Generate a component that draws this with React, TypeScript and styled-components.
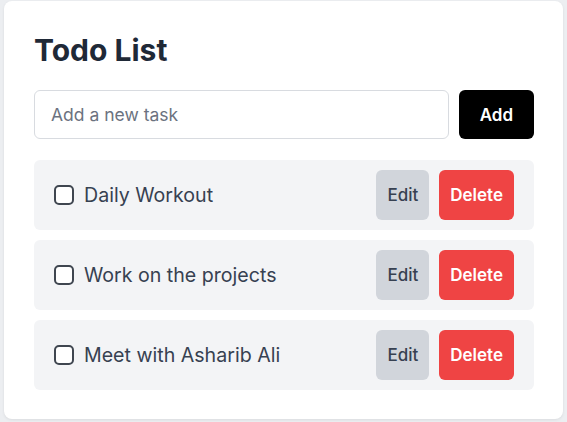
import styled, { createGlobalStyle } from "styled-components";

const GlobalStyle = createGlobalStyle`
  html, body {
    margin: 0;
    padding: 0;
    background: #eceef1;
    font-family: Inter, "Liberation Sans", sans-serif;
  }
`;

const Page = styled.div`
  padding: 1px 4px 4px 4px;
`;

const Card = styled.div`
  background: #ffffff;
  border-radius: 8px;
  box-shadow: 0 1px 3px rgba(0, 0, 0, 0.08);
  padding: 30px 29px 29px 30px;
`;

const Title = styled.h1`
  margin: 0 0 21px 0;
  font-size: 30px;
  line-height: 38px;
  font-weight: 700;
  color: #1f2937;
`;

const Form = styled.div`
  display: flex;
  gap: 10px;
  margin-bottom: 21px;
`;

const Input = styled.input`
  flex: 1;
  height: 49px;
  box-sizing: border-box;
  border: 1px solid #d8dbe0;
  border-radius: 6px;
  padding: 0 16px;
  font-family: inherit;
  font-size: 17.5px;
  color: #111827;
  outline: none;
  &::placeholder {
    color: #6b7280;
  }
`;

const Button = styled.button<{ $variant: "add" | "edit" | "delete" }>`
  height: ${(p) => (p.$variant === "add" ? "49px" : "50px")};
  border: none;
  border-radius: 6px;
  font-family: inherit;
  font-size: 17px;
  padding: 0 ${(p) => (p.$variant === "add" ? "21px" : "11px")};
  font-weight: ${(p) => (p.$variant === "edit" ? 500 : 600)};
  background: ${(p) =>
    p.$variant === "add" ? "#000000" : p.$variant === "edit" ? "#d1d5db" : "#ef4444"};
  color: ${(p) => (p.$variant === "edit" ? "#374151" : "#ffffff")};
  cursor: pointer;
`;

const List = styled.div`
  display: flex;
  flex-direction: column;
  gap: 10px;
`;

const Row = styled.div`
  display: flex;
  align-items: center;
  background: #f3f4f6;
  border-radius: 6px;
  padding: 10px 20px;
  gap: 10px;
`;

const Label = styled.label`
  flex: 1;
  display: flex;
  align-items: center;
  gap: 10px;
  font-size: 19.6px;
  color: #374151;
`;

const Check = styled.input`
  appearance: none;
  flex-shrink: 0;
  margin: 0;
  width: 20px;
  height: 20px;
  box-sizing: border-box;
  border: 2px solid #3f4650;
  border-radius: 5px;
  background: #ffffff;
`;

const todos = ["Daily Workout", "Work on the projects", "Meet with Asharib Ali"];

export default function App() {
  return (
    <Page>
      <GlobalStyle />
      <Card>
        <Title>Todo List</Title>
        <Form>
          <Input placeholder="Add a new task" />
          <Button $variant="add">Add</Button>
        </Form>
        <List>
          {todos.map((t) => (
            <Row key={t}>
              <Label>
                <Check type="checkbox" />
                {t}
              </Label>
              <Button $variant="edit">Edit</Button>
              <Button $variant="delete">Delete</Button>
            </Row>
          ))}
        </List>
      </Card>
    </Page>
  );
}
